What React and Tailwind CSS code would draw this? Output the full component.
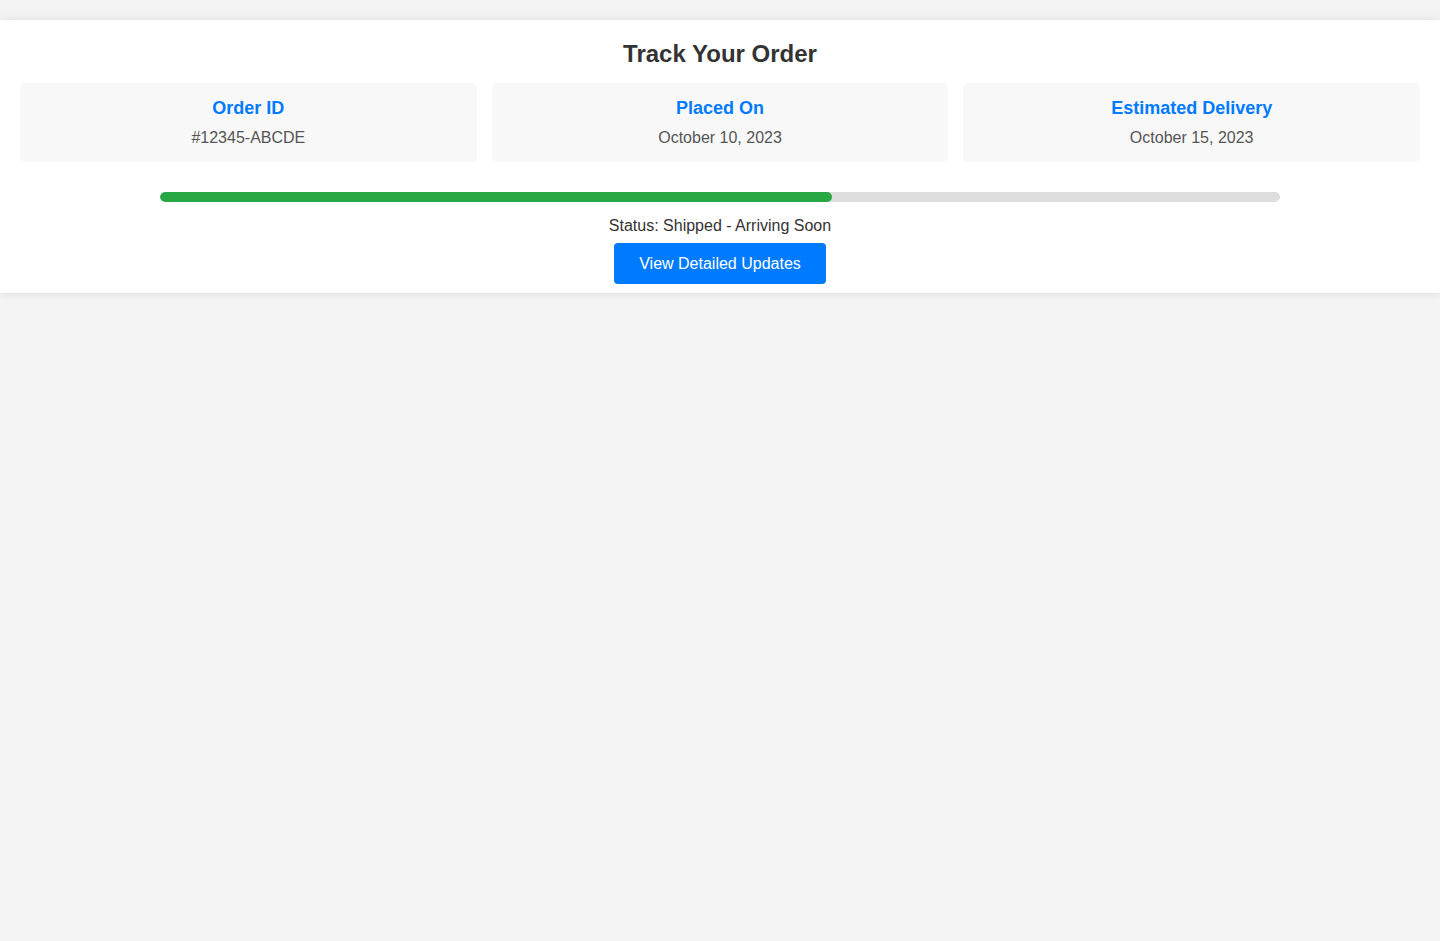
import React from 'react';

const details = [
  { label: 'Order ID', value: '#12345-ABCDE' },
  { label: 'Placed On', value: 'October 10, 2023' },
  { label: 'Estimated Delivery', value: 'October 15, 2023' },
];

const App = () => {
  const progress = 60;

  return (
    <div className="min-h-screen bg-[#f4f4f4] pt-5 font-['Liberation_Sans',Arial,sans-serif]">
      {/* Tracking panel */}
      <div className="bg-white px-5 pt-5 pb-[9px] shadow-[0_0_10px_rgba(0,0,0,0.1)] text-center">
        <h1 className="text-[24px] leading-[27px] font-bold text-[#333] mb-4">Track Your Order</h1>

        <div className="flex gap-[15px]">
          {details.map(d => (
            <div key={d.label} className="flex-1 bg-[#f8f8f8] rounded-[5px] py-[15px]">
              <h3 className="text-[18px] leading-[20px] font-bold text-[#007bff] mb-[11px]">{d.label}</h3>
              <p className="text-[16px] leading-[18px] text-[#555]">{d.value}</p>
            </div>
          ))}
        </div>

        {/* Progress */}
        <div className="w-[80%] mx-auto mt-[30px] h-[10px] rounded-full bg-[#ddd] overflow-hidden">
          <div className="h-full rounded-full bg-[#28a745]" style={{ width: `${progress}%` }} />
        </div>

        <p className="mt-[14px] text-[16px] leading-[19px] text-[#333]">Status: Shipped - Arriving Soon</p>

        <button className="mt-[8px] px-[25px] py-[11px] text-[16px] leading-[19px] text-white bg-[#007bff] rounded-[4px] cursor-pointer">
          View Detailed Updates
        </button>
      </div>
    </div>
  );
};

export default App;
